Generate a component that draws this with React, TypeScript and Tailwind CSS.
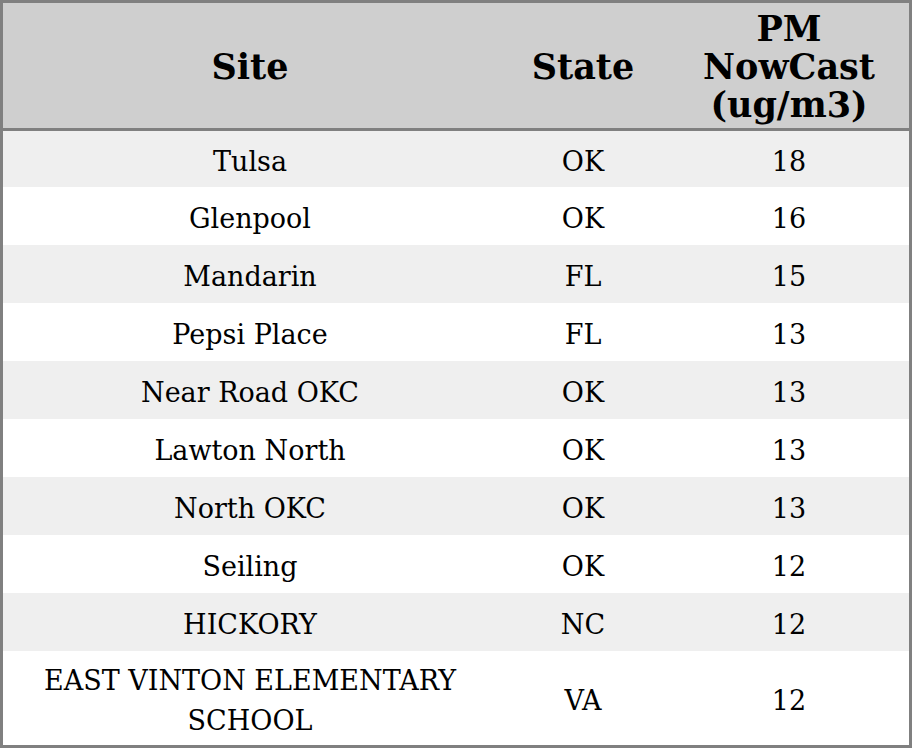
import React from "react";

const rows: [string, string, string][] = [
  ["Tulsa", "OK", "18"],
  ["Glenpool", "OK", "16"],
  ["Mandarin", "FL", "15"],
  ["Pepsi Place", "FL", "13"],
  ["Near Road OKC", "OK", "13"],
  ["Lawton North", "OK", "13"],
  ["North OKC", "OK", "13"],
  ["Seiling", "OK", "12"],
  ["HICKORY", "NC", "12"],
  ["EAST VINTON ELEMENTARY SCHOOL", "VA", "12"],
];

export default function App() {
  return (
    <div
      className="w-[912px] h-[748px] border-[3px] border-[#808080] bg-white text-black overflow-hidden"
      style={{ fontFamily: '"DejaVu Serif", serif' }}
    >
      <div className="grid grid-cols-[494px_172px_240px] h-[128px] bg-[#cfcfcf] border-b-[3px] border-[#808080] font-bold text-[35px] leading-[38px] text-center pt-[2px]">
        <div className="flex items-center justify-center">Site</div>
        <div className="flex items-center justify-center">State</div>
        <div className="flex items-center justify-center">
          <span>
            PM
            <br />
            NowCast
            <br />
            (ug/m3)
          </span>
        </div>
      </div>
      {rows.map((r, i) => {
        const last = i === rows.length - 1;
        const h = i === 0 ? "h-[56px]" : last ? "h-[94px]" : "h-[58px]";
        const bg = i % 2 === 0 ? "bg-[#efefef]" : "bg-white";
        return (
          <div
            key={i}
            className={`grid grid-cols-[494px_172px_240px] ${h} ${bg} text-[27px] leading-[40px] text-center pt-[5px]`}
          >
            <div className="flex items-center justify-center px-8">{r[0]}</div>
            <div className="flex items-center justify-center">{r[1]}</div>
            <div className="flex items-center justify-center">{r[2]}</div>
          </div>
        );
      })}
    </div>
  );
}
